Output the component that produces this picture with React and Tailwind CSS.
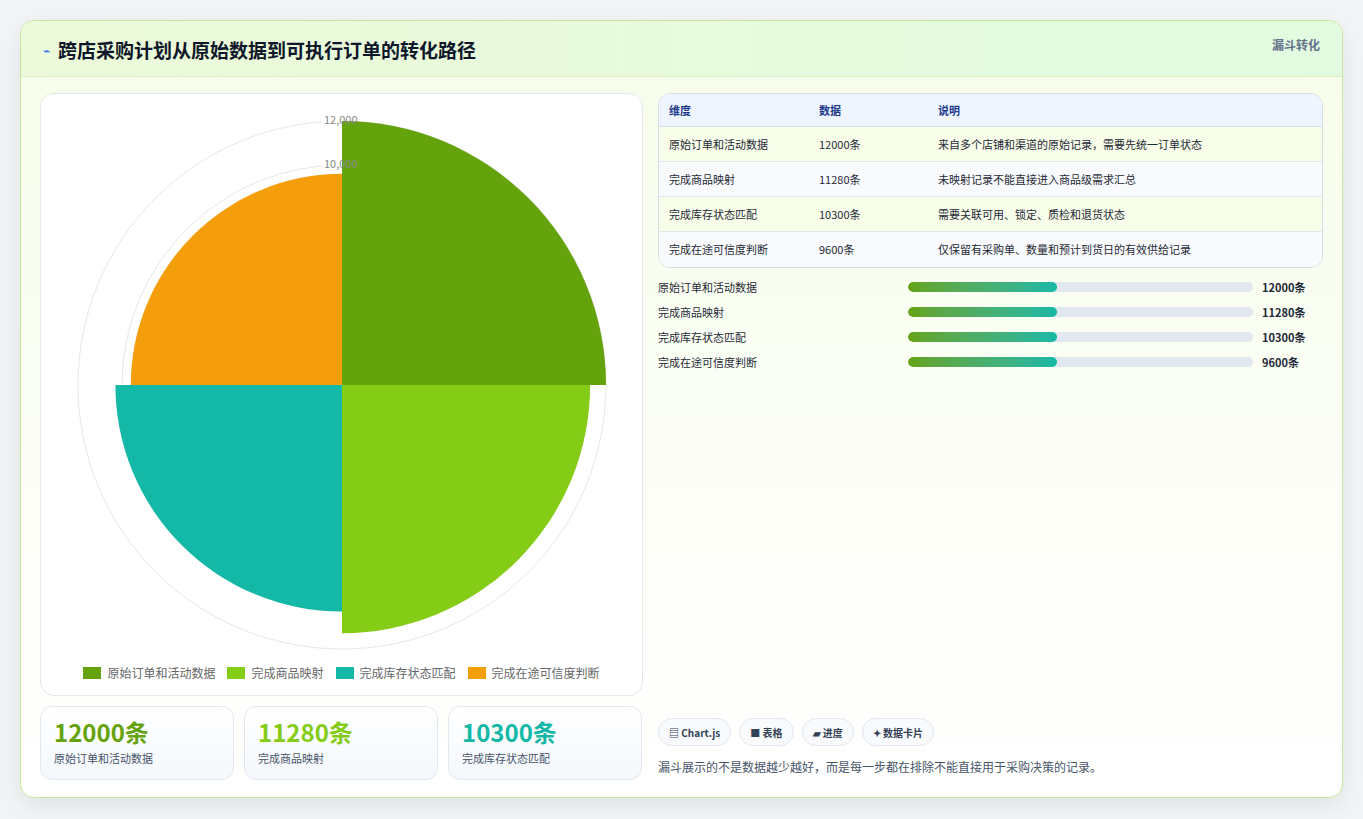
import React from "react";

const F = { fontFamily: '"Noto Sans CJK SC","Noto Sans",sans-serif' };
const rows = [
  ["原始订单和活动数据", "12000条", "来自多个店铺和渠道的原始记录，需要先统一订单状态"],
  ["完成商品映射", "11280条", "未映射记录不能直接进入商品级需求汇总"],
  ["完成库存状态匹配", "10300条", "需要关联可用、锁定、质检和退货状态"],
  ["完成在途可信度判断", "9600条", "仅保留有采购单、数量和预计到货日的有效供给记录"],
];
const colors = ["#65a30d", "#84cc16", "#14b8a6", "#f59e0b"];
const vals = [12000, 11280, 10300, 9600];

function arc(cx, cy, r, a0, a1) {
  const p = (a) => [cx + r * Math.cos(a), cy + r * Math.sin(a)];
  const [x0, y0] = p(a0), [x1, y1] = p(a1);
  return `M${cx},${cy} L${x0},${y0} A${r},${r} 0 0 1 ${x1},${y1} Z`;
}

function Polar() {
  const cx = 301, cy = 285, k = 264 / 12000;
  return (
    <svg width="602" height="560" className="block">
      {[2000, 4000, 6000, 8000, 10000, 12000].map((v) => (
        <circle key={v} cx={cx} cy={cy} r={v * k} fill="none" stroke="#e5e7eb" strokeWidth="1" />
      ))}
      {vals.map((v, i) => (
        <path key={i} d={arc(cx, cy, v * k, -Math.PI / 2 + (i * Math.PI) / 2, (i * Math.PI) / 2)} fill={colors[i]} />
      ))}
      {[10000, 12000].map((v) => (
        <g key={v}>
          <rect x={cx - 20} y={cy - v * k - 7} width="20" height="12" fill="white" opacity="0.8" />
          <text x={cx - 18} y={cy - v * k + 3} fontSize="11" fill="#888" style={F}>{v.toLocaleString("en-US")}</text>
        </g>
      ))}
    </svg>
  );
}

export default function App() {
  return (
    <div className="w-[1363px] h-[819px] bg-[#f3f4f6] p-[20px]" style={F}>
      <div className="h-[778px] rounded-[14px] border border-[#c7e89a] bg-gradient-to-b from-[#f7fdea] to-white shadow-[0_8px_24px_rgba(0,0,0,0.08)] overflow-hidden flex flex-col">
        <div className="h-[56px] shrink-0 flex items-start justify-between px-[22px] bg-gradient-to-r from-[#ecfad9] to-[#e2fbe0] border-b border-[#dcefc6]">
          <div className="flex items-center gap-[8px] pt-[15px]">
            <span className="text-[12px] text-[#2563eb]">⌁</span>
            <span className="text-[19px] font-bold text-[#0f172a]">跨店采购计划从原始数据到可执行订单的转化路径</span>
          </div>
          <span className="pt-[15px] text-[12px] font-bold text-[#64748b]">漏斗转化</span>
        </div>
        <div className="flex-1 flex gap-[15px] px-[19px] pt-[16px]">
          <div className="w-[603px] flex flex-col gap-[10px]">
            <div className="h-[603px] rounded-[14px] border border-[#e5e7eb] bg-white flex flex-col items-center pt-[6px]">
              <Polar />
              <div className="flex gap-[12px] text-[12px] text-[#666] mt-[4px]">
                {rows.map((r, i) => (
                  <div key={i} className="flex items-center gap-[6px]">
                    <span className="w-[18px] h-[12px]" style={{ background: colors[i] }} />
                    {r[0]}
                  </div>
                ))}
              </div>
            </div>
            <div className="flex gap-[10px]">
              {rows.slice(0, 3).map((r, i) => (
                <div key={i} className="w-[194px] h-[74px] rounded-[12px] border border-[#e2e8f0] bg-gradient-to-b from-white to-[#f4f8fc] px-[13px] pt-[9px]">
                  <div className="text-[24px] font-bold leading-[32px]" style={{ color: colors[i] }}>{r[1]}</div>
                  <div className="text-[11px] text-[#475569] mt-[2px]">{r[0]}</div>
                </div>
              ))}
            </div>
          </div>
          <div className="flex-1 flex flex-col">
            <div className="rounded-[12px] border border-[#d6dee8] overflow-hidden text-[11px]">
              <div className="flex h-[33px] items-center bg-[#eef5ff] text-[#1e3a8a] font-bold border-b border-[#d6dee8]">
                <div className="w-[160px] pl-[10px]">维度</div><div className="w-[119px]">数据</div><div>说明</div>
              </div>
              {rows.map((r, i) => (
                <div key={i} className={`flex h-[35px] items-center text-[#1f2937] ${i < 3 ? "border-b border-[#e2e8f0]" : ""} ${i % 2 ? "bg-[#f8fafc]" : "bg-[#f7fde9]"}`}>
                  <div className="w-[160px] pl-[10px]">{r[0]}</div><div className="w-[119px]">{r[1]}</div><div>{r[2]}</div>
                </div>
              ))}
            </div>
            <div className="flex flex-col gap-[11px] mt-[12px] text-[11px]">
              {rows.map((r, i) => (
                <div key={i} className="flex items-center h-[14px]">
                  <div className="w-[250px] text-[#1f2937]">{r[0]}</div>
                  <div className="w-[345px] h-[10px] rounded-full bg-[#e2e8f0] overflow-hidden">
                    <div className="h-full w-[149px] rounded-full bg-gradient-to-r from-[#65a30d] to-[#14b8a6]" />
                  </div>
                  <div className="ml-[9px] font-bold text-[#1f2937]">{r[1]}</div>
                </div>
              ))}
            </div>
            <div className="flex-1" />
            <div className="flex gap-[8px] mt-auto text-[10px] font-bold text-[#334155]">
              {["▤ Chart.js", "■ 表格", "▰ 进度", "✦ 数据卡片"].map((t) => (
                <span key={t} className="h-[28px] px-[10px] flex items-center rounded-full border border-[#e2e8f0] bg-[#f8fafc]">{t}</span>
              ))}
            </div>
            <div className="text-[12px] text-[#475569] mt-[12px] mb-[21px]">漏斗展示的不是数据越少越好，而是每一步都在排除不能直接用于采购决策的记录。</div>
          </div>
        </div>
      </div>
    </div>
  );
}
